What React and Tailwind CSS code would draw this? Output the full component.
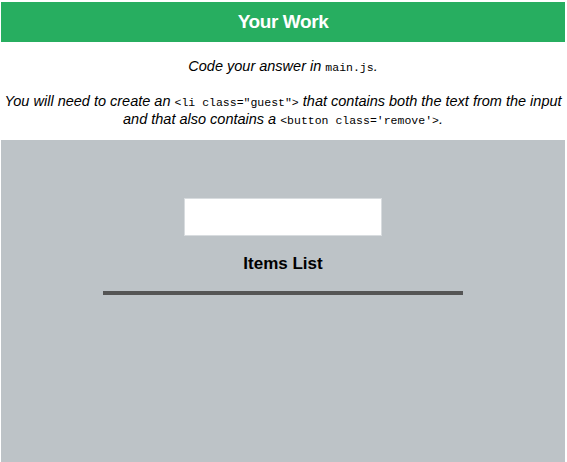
import React from 'react';

const App = () => {
  return (
    <div className="w-[567px] h-[462px] overflow-hidden bg-white pl-[1px] pr-[2px] pt-[2px] font-['Liberation_Sans',Arial,sans-serif] text-black">
      {/* Header */}
      <div className="h-[40px] bg-[#27ae60] flex items-center justify-center">
        <h1 className="text-white font-bold text-[19px] tracking-[-0.4px]">Your Work</h1>
      </div>

      {/* Instructions */}
      <div className="h-[98px] flex flex-col items-center text-center italic text-[14.5px] leading-[17px]">
        <p className="mt-[16px]">
          Code your answer in <code className="font-['Liberation_Mono',monospace] not-italic text-[11.5px]">main.js</code>.
        </p>
        <p className="mt-[17px] whitespace-nowrap">
          You will need to create an{' '}
          <code className="font-['Liberation_Mono',monospace] not-italic text-[11.5px]">&lt;li class="guest"&gt;</code>{' '}
          that contains both the text from the input
          <br />
          and that also contains a{' '}
          <code className="font-['Liberation_Mono',monospace] not-italic text-[11.5px]">&lt;button class='remove'&gt;</code>.
        </p>
      </div>

      {/* Work area */}
      <div className="h-[330px] bg-[#bdc3c7] flex flex-col items-center">
        <input
          type="text"
          className="mt-[58px] w-[198px] h-[38px] bg-white border border-[#d8dcdf] outline-none"
        />
        <h2 className="mt-[18px] font-bold text-[17px] leading-[20px]">Items List</h2>
        <div className="mt-[17px] w-[360px] h-[4px] bg-[#555555] ml-[-1px]" />
      </div>
    </div>
  );
};

export default App;
